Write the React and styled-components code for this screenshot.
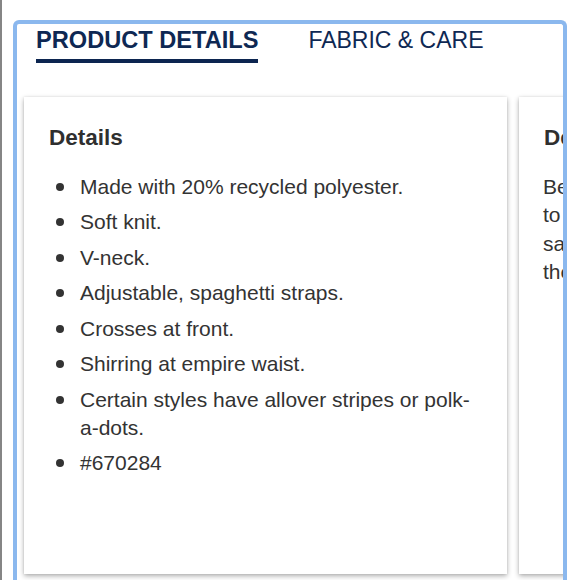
import React from "react";
import styled, { createGlobalStyle } from "styled-components";

const Global = createGlobalStyle`
  html, body { margin: 0; padding: 0; background: #fff; }
  body { font-family: "Liberation Sans", Arial, Helvetica, sans-serif; }
  * { box-sizing: border-box; }
`;

const Page = styled.div`
  height: 580px;
  overflow: hidden;
  border-left: 2px solid #858585;
  padding: 20px 0 0 11px;
  display: flex;
  align-items: flex-start;
`;

const Frame = styled.section`
  flex: 0 0 554px;
  width: 554px;
  height: 600px;
  border: 4px solid #8bb8ee;
  border-bottom: 0;
  border-radius: 6px 6px 0 0;
  overflow: hidden;
  background: #fff;
  display: flex;
  flex-direction: column;
`;

const TabBar = styled.nav`
  display: flex;
  align-items: flex-start;
  gap: 50px;
  padding: 2px 0 0 19px;
`;

const Tab = styled.div`
  font-size: ${p => (p.$active ? "23.6px" : "23px")};
  line-height: 28px;
  font-weight: ${p => (p.$active ? 700 : 400)};
  color: #0e2853;
  padding-bottom: 4.5px;
  border-bottom: 4px solid ${p => (p.$active ? "#0c2550" : "transparent")};
  white-space: nowrap;
`;

const CardRow = styled.div`
  display: flex;
  gap: 12px;
  padding-left: 7px;
  margin-top: 34px;
`;

const Card = styled.article`
  flex: 0 0 483px;
  width: 483px;
  height: 477px;
  background: #fff;
  box-shadow: 0 2px 5px rgba(0, 0, 0, 0.32), 0 0 2px rgba(0, 0, 0, 0.08);
  padding: 27px 25px 0 24px;
  color: #333;
`;

const Heading = styled.h3`
  margin: 0 0 21px;
  font-size: 22.5px;
  line-height: 28px;
  font-weight: 700;
  color: #2f2f2f;
  padding-left: 1px;
`;

const List = styled.ul`
  list-style: none;
  margin: 0;
  padding: 0;
`;

const Item = styled.li`
  display: flex;
  align-items: flex-start;
  font-size: 21px;
  line-height: 28px;
  margin-bottom: 7.5px;
  color: #333;

  &::before {
    content: "";
    flex: 0 0 8px;
    width: 8px;
    height: 8px;
    border-radius: 50%;
    background: #333;
    margin: 10px 16px 0 8px;
  }
`;

const Para = styled.p`
  margin: 0;
  font-size: 21px;
  line-height: 28.5px;
  color: #333;
  white-space: nowrap;
`;

const details = [
  "Made with 20% recycled polyester.",
  "Soft knit.",
  "V-neck.",
  "Adjustable, spaghetti straps.",
  "Crosses at front.",
  "Shirring at empire waist.",
  "Certain styles have allover stripes or polk-a-dots.",
  "#670284",
];

export default function App() {
  return (
    <>
      <Global />
      <Page>
        <Frame>
          <TabBar>
            <Tab $active>PRODUCT DETAILS</Tab>
            <Tab>FABRIC &amp; CARE</Tab>
          </TabBar>
          <CardRow>
            <Card>
              <Heading>Details</Heading>
              <List>
                {details.map(d => (
                  <Item key={d}>{d}</Item>
                ))}
              </List>
            </Card>
            <Card>
              <Heading>Description</Heading>
              <Para>
                Be bold and breezy in this feminine tank,
                <br />
                to wear with shorts, skirts or jeans. The
                <br />
                same soft knit you love, finished with
                <br />
                the signature details you adore.
              </Para>
            </Card>
          </CardRow>
        </Frame>
      </Page>
    </>
  );
}
